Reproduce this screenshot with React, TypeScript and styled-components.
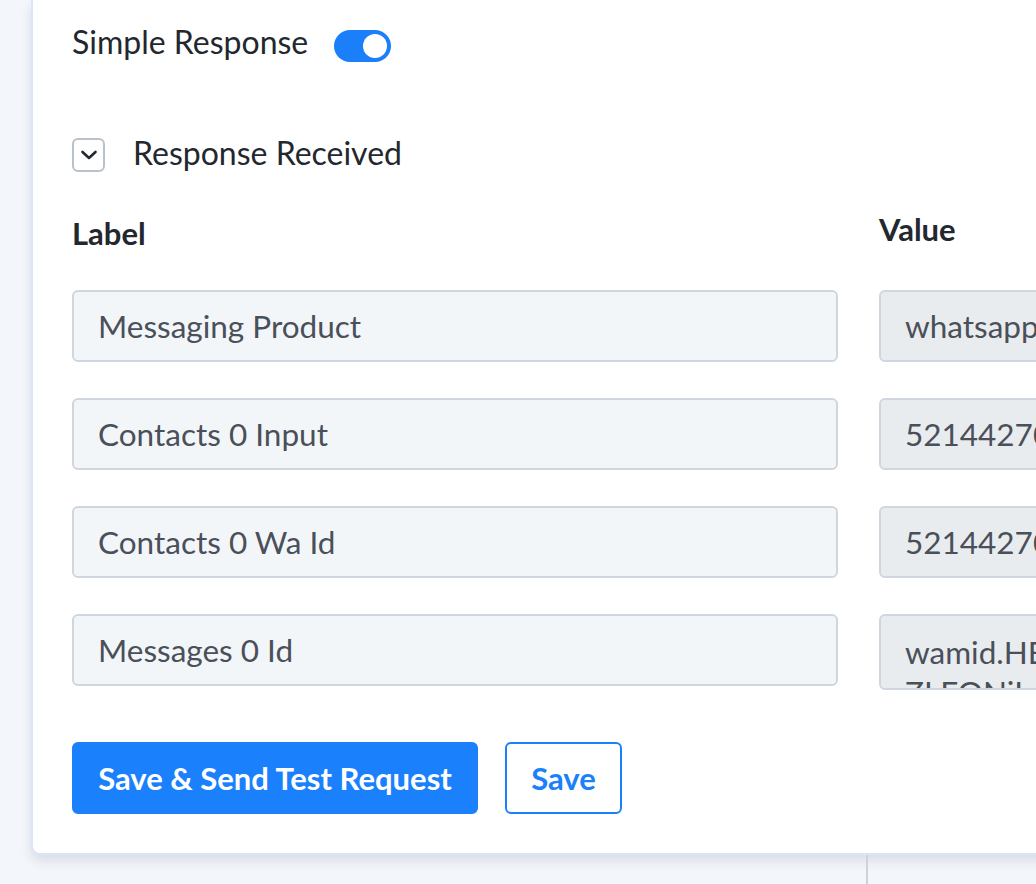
import { type FC } from "react";
import styled, { createGlobalStyle } from "styled-components";

const rows = [
  { label: "Messaging Product", value: "whatsapp" },
  { label: "Contacts 0 Input", value: "5214427001234" },
  { label: "Contacts 0 Wa Id", value: "5214427001234" },
  {
    label: "Messages 0 Id",
    value: "wamid.HBgNNTIxNDQyNzAwMTIzNBUCABEYEjVFQjZBRkE2RkZBMkZDOUI3AA==\nZLEQNiIxRjM0",
    multiline: true,
  },
];

const App: FC = () => {
  return (
    <Page>
      <GlobalStyle />
      <Card>
        <ToggleRow>
          <ToggleLabel>Simple Response</ToggleLabel>
          <Toggle $on>
            <Knob />
          </Toggle>
        </ToggleRow>

        <CollapseRow>
          <CollapseBox>
            <svg width="20" height="20" viewBox="0 0 20 20" fill="none">
              <path
                d="M3.5 7 L10 13 L16.5 7"
                stroke="#23272e"
                strokeWidth="2.6"
                strokeLinecap="round"
                strokeLinejoin="round"
              />
            </svg>
          </CollapseBox>
          <CollapseTitle>Response Received</CollapseTitle>
        </CollapseRow>

        <Grid>
          <HeadCell>Label</HeadCell>
          <HeadCell $raise>Value</HeadCell>
          {rows.map((r) => (
            <Row key={r.label}>
              <LabelInput defaultValue={r.label} />
              {r.multiline ? (
                <ValueArea disabled defaultValue={r.value} />
              ) : (
                <ValueInput disabled defaultValue={r.value} />
              )}
            </Row>
          ))}
        </Grid>

        <Actions>
          <PrimaryButton>Save &amp; Send Test Request</PrimaryButton>
          <OutlineButton>Save</OutlineButton>
        </Actions>
      </Card>
      <Below>
        <Divider />
      </Below>
    </Page>
  );
};

export default App;

const GlobalStyle = createGlobalStyle`
  html, body {
    margin: 0;
    padding: 0;
    background: #f3f6fa;
    overflow: hidden;
  }
  * {
    box-sizing: border-box;
  }
`;

const Page = styled.div`
  width: 1036px;
  height: 884px;
  overflow: hidden;
  padding-left: 31px;
  font-family: "Lato", "Open Sans", sans-serif;
  color: #23272e;
`;

const Card = styled.div`
  width: 1800px;
  background: #fff;
  border-left: 2px solid #d9e5fb;
  border-bottom: 2px solid #d9e5fb;
  border-radius: 0 0 0 9px;
  box-shadow: 0 6px 12px rgba(30, 45, 70, 0.12);
  padding: 24px 0 39px 39px;
`;

const ToggleRow = styled.div`
  display: flex;
  align-items: center;
  gap: 26px;
  height: 36px;
`;

const ToggleLabel = styled.span`
  font-size: 32px;
  line-height: 36px;
`;

const Toggle = styled.div<{ $on?: boolean }>`
  width: 57px;
  height: 32px;
  border-radius: 16px;
  background: ${(p) => (p.$on ? "#1a7ff8" : "#cfd5dc")};
  display: flex;
  align-items: center;
  justify-content: ${(p) => (p.$on ? "flex-end" : "flex-start")};
  padding: 0 4px;
  margin-top: 8px;
`;

const Knob = styled.div`
  width: 24px;
  height: 24px;
  border-radius: 50%;
  background: #fff;
`;

const CollapseRow = styled.div`
  display: flex;
  align-items: center;
  gap: 28px;
  margin-top: 78px;
`;

const CollapseBox = styled.div`
  width: 33px;
  height: 34px;
  border: 2px solid #b9c1cb;
  border-radius: 6px;
  display: flex;
  align-items: center;
  justify-content: center;
`;

const CollapseTitle = styled.span`
  font-size: 32px;
  line-height: 34px;
  margin-top: -4px;
`;

const Grid = styled.div`
  display: grid;
  grid-template-columns: 766px 766px;
  column-gap: 41px;
  margin-top: 45px;
`;

// "Value" sits a few pixels higher than "Label"
const HeadCell = styled.div<{ $raise?: boolean }>`
  font-size: 31px;
  font-weight: 700;
  line-height: 32px;
  height: 32px;
  margin-top: ${(p) => (p.$raise ? "-4px" : "0")};
  margin-bottom: ${(p) => (p.$raise ? "9px" : "5px")};
`;

const Row = styled.div`
  display: contents;
`;

const fieldBase = `
  height: 72px;
  border-radius: 6px;
  border: 2px solid #d0d6dd;
  padding: 0 24px;
  font-family: "Lato", "Open Sans", sans-serif;
  font-size: 31.5px;
  color: #4a5059;
  outline: none;
  width: 100%;
  margin-top: 36px;
`;

const LabelInput = styled.input`
  ${fieldBase}
  background: #f3f6f9;
`;

const ValueInput = styled.input`
  ${fieldBase}
  background: #e9ecef;
  &:disabled {
    color: #4a5059;
    -webkit-text-fill-color: #4a5059;
    opacity: 1;
  }
`;

const ValueArea = styled.textarea`
  ${fieldBase}
  height: 76px;
  background: #e9ecef;
  resize: none;
  overflow: hidden;
  padding-top: 16px;
  line-height: 40px;
  white-space: pre;
  &:disabled {
    color: #4a5059;
    -webkit-text-fill-color: #4a5059;
    opacity: 1;
  }
`;

const Actions = styled.div`
  display: flex;
  gap: 27px;
  margin-top: 52px;
`;

const buttonBase = `
  height: 72px;
  border-radius: 6px;
  font-family: "Lato", "Open Sans", sans-serif;
  font-size: 31px;
  font-weight: 700;
  padding: 0 16px;
  cursor: pointer;
`;

const PrimaryButton = styled.button`
  ${buttonBase}
  width: 406px;
  background: #1a80fb;
  border: 2px solid #1a80fb;
  color: #fff;
`;

const OutlineButton = styled.button`
  ${buttonBase}
  width: 117px;
  background: #fff;
  border: 2px solid #1a80fb;
  color: #1a80fb;
`;

const Below = styled.div`
  height: 40px;
  padding-left: 835px;
`;

const Divider = styled.div`
  width: 2px;
  height: 100%;
  background: #cfd3d8;
`;
